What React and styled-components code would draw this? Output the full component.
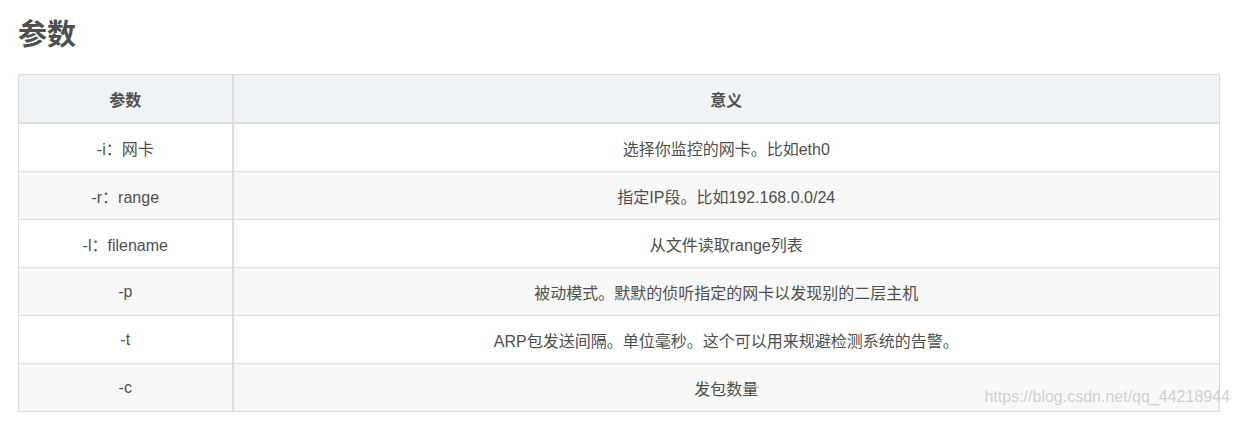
import React from 'react';
import styled, { createGlobalStyle } from 'styled-components';

const GlobalStyle = createGlobalStyle`
  body {
    margin: 0;
    background: #fff;
    font-family: "Liberation Sans", "Noto Sans CJK SC", sans-serif;
    color: #4f4f4f;
  }
`;

const rows = [
  ['-i：网卡', '选择你监控的网卡。比如eth0'],
  ['-r：range', '指定IP段。比如192.168.0.0/24'],
  ['-l：filename', '从文件读取range列表'],
  ['-p', '被动模式。默默的侦听指定的网卡以发现别的二层主机'],
  ['-t', 'ARP包发送间隔。单位毫秒。这个可以用来规避检测系统的告警。'],
  ['-c', '发包数量'],
];

function App() {
  return (
    <Page>
      <GlobalStyle />
      <Heading>参数</Heading>
      <Table>
        <colgroup>
          <col style={{ width: 214 }} />
          <col />
        </colgroup>
        <thead>
          <tr>
            <Th>参数</Th>
            <Th>意义</Th>
          </tr>
        </thead>
        <tbody>
          {rows.map(([k, v], i) => (
            <Row key={k} $alt={i % 2 === 1}>
              <Td>{k}</Td>
              <Td>{v}</Td>
            </Row>
          ))}
        </tbody>
      </Table>
      <Watermark>https://blog.csdn.net/qq_44218944</Watermark>
    </Page>
  );
}

const Page = styled.div`
  position: relative;
  padding: 14px 18px 0 18px;
  width: 1202px;
`;

const Heading = styled.h2`
  margin: 0 0 18px 0;
  font-size: 29px;
  font-weight: bold;
  line-height: 42px;
  color: #4f4f4f;
`;

const Table = styled.table`
  width: 1202px;
  border-collapse: collapse;
  table-layout: fixed;
  font-size: 16px;
`;

const Th = styled.th`
  height: 47px;
  padding: 0;
  background: #eff3f5;
  border: 1px solid #ddd;
  border-bottom: 2px solid #ddd;
  font-weight: bold;
  text-align: center;
  &:first-child { border-right: 2px solid #ddd; }
`;

const Row = styled.tr`
  background: ${p => (p.$alt ? '#f8f8f8' : '#fff')};
`;

const Td = styled.td`
  height: 47px;
  padding: 0;
  border: 1px solid #ddd;
  text-align: center;
  &:first-child { border-right: 2px solid #ddd; }
`;

const Watermark = styled.div`
  position: absolute;
  right: 8px;
  bottom: 6px;
  font-size: 16px;
  color: rgba(190, 190, 190, 0.7);
`;

export default App;
